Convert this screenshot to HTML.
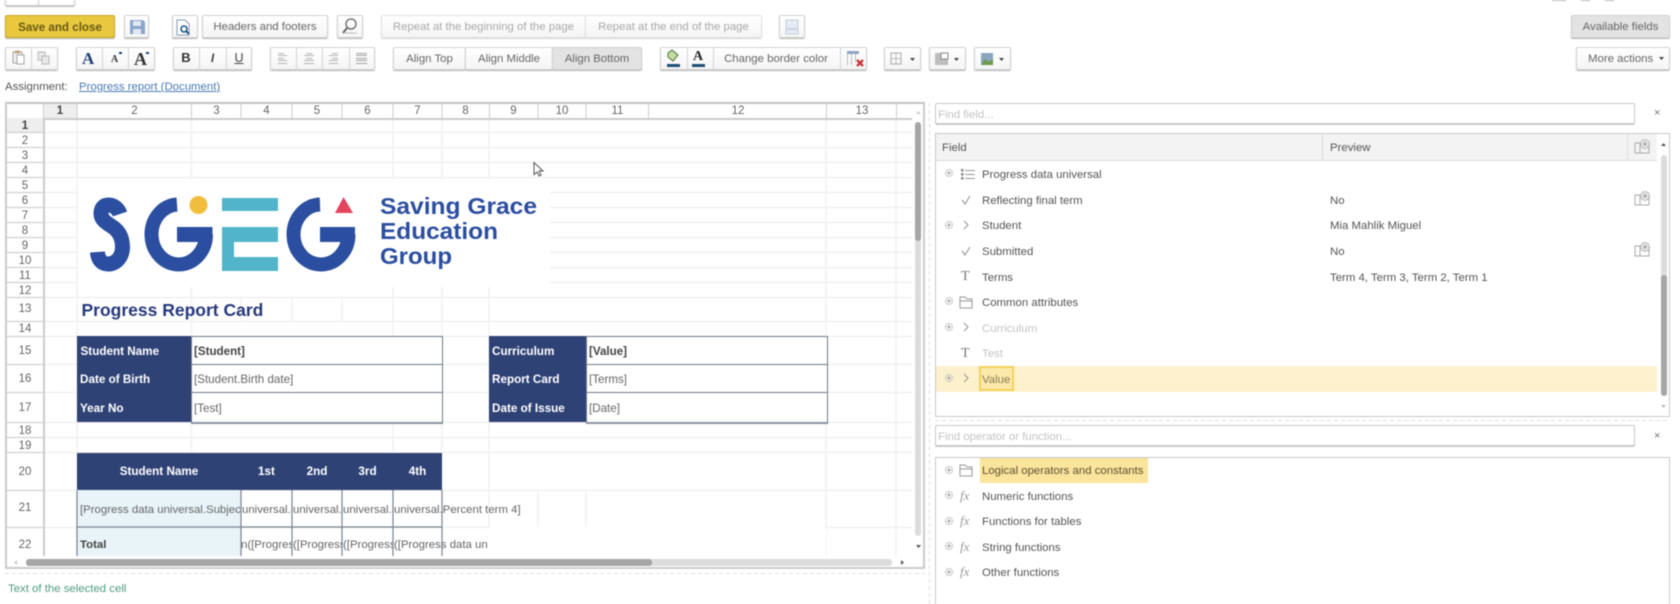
<!DOCTYPE html>
<html><head><meta charset="utf-8"><title>Report</title>
<style>
html,body{margin:0;padding:0;background:#fff}
body{width:1680px;height:604px;overflow:hidden;position:relative;font-family:"Liberation Sans",sans-serif;font-size:11.4px;color:#555}
#r{position:absolute;left:0;top:0;width:1680px;height:604px;overflow:hidden;filter:blur(.45px);background:#fff}
#r div,#r svg,#r span.a{position:absolute}
.b{box-sizing:border-box;height:23px;top:15px;border:1px solid #d2d2d2;border-radius:2px;background:linear-gradient(#fff,#f5f5f5);box-shadow:0 1px 1px #b5b5b5;text-align:center;line-height:23px;color:#666;white-space:nowrap}
.r2{top:47px}
.p{background:#e3e3e3}
.d{color:#aaa;box-shadow:0 1px 1px #d5d5d5;border-color:#e2e2e2}
.v{width:1px;background:#d4d4d4;height:23px}
.t{white-space:nowrap;line-height:14px;color:#555;margin-top:1px}
.h{white-space:nowrap;text-align:center;color:#666;font-size:11.5px;line-height:15px}
.w{color:#fff;font-weight:bold;white-space:nowrap;line-height:14px;font-size:11.7px;margin-top:1px}
.g{color:#666;white-space:nowrap;line-height:14px;overflow:hidden;margin-top:1px}
.g2{font-size:11.6px}
.in{box-sizing:border-box;border:1px solid #c8c8c8;border-bottom-width:2px;border-radius:2px;background:#fff;color:#c4c4c4;line-height:22px;padding-left:2px;white-space:nowrap}
</style></head><body><div id="r">

<!-- top cut-off -->
<div style="left:5px;top:-16px;width:70px;height:22px;box-sizing:border-box;border:1px solid #ccc;border-radius:2px;box-shadow:0 1px 1px #bbb"></div>
<div style="left:38px;top:0;width:1px;height:6px;background:#ccc"></div>
<div style="left:112px;top:-15px;font-size:16px;line-height:20px;color:#333;white-space:nowrap">TEST</div>
<div style="left:1552px;top:0;width:14px;height:1px;background:#bbb"></div>
<div style="left:1581px;top:0;width:9px;height:1px;background:#bbb"></div>
<div style="left:1605px;top:0;width:9px;height:1px;background:#bbb"></div>

<!-- toolbar row 1 -->
<div class="b" style="left:5px;width:110px;background:#e8c83f;border-color:#c9a92c;color:#6b5a15;font-weight:bold;font-size:11.6px">Save and close</div>
<div class="b" style="left:124px;width:25px"></div>
<div class="b" style="left:172px;width:26px"></div>
<div class="b" style="left:202px;width:126px">Headers and footers</div>
<div class="b" style="left:337px;width:26px"></div>
<div class="b d" style="left:381px;width:205px">Repeat at the beginning of the page</div>
<div class="b d" style="left:585px;width:177px">Repeat at the end of the page</div>
<div class="b" style="left:779px;width:26px"></div>
<div class="b p" style="left:1571px;width:99px">Available fields</div>

<!-- toolbar row 2 -->
<div class="b r2" style="left:5px;width:53px"></div><div class="v" style="left:31px;top:47px"></div>
<div class="b r2" style="left:76px;width:79px"></div><div class="v" style="left:102px;top:47px"></div><div class="v" style="left:128px;top:47px"></div>
<div style="left:82px;top:49px;font:bold 17px/20px 'Liberation Serif',serif;color:#1f3f73">A</div>
<div style="left:111px;top:53px;font:bold 10px/14px 'Liberation Serif',serif;color:#333">A</div>
<div style="left:134px;top:48px;font:bold 18px/22px 'Liberation Serif',serif;color:#333">A</div>
<div style="left:119px;top:52px;width:3px;height:2px;background:#1f3f73"></div>
<div style="left:146px;top:52px;width:3px;height:2px;background:#1f3f73"></div>
<div class="b r2" style="left:173px;width:79px"></div><div class="v" style="left:199px;top:47px"></div><div class="v" style="left:226px;top:47px"></div>
<div style="left:173px;width:26px;top:50px;text-align:center;font:bold 13px/16px 'Liberation Sans',sans-serif;color:#333">B</div>
<div style="left:199px;width:27px;top:50px;text-align:center;font:italic bold 12px/16px 'Liberation Sans',sans-serif;color:#444">I</div>
<div style="left:226px;width:26px;top:50px;text-align:center;font:12.5px/16px 'Liberation Sans',sans-serif;color:#444;text-decoration:underline">U</div>
<div class="b r2" style="left:270px;width:105px"></div><div class="v" style="left:296px;top:47px"></div><div class="v" style="left:322px;top:47px"></div><div class="v" style="left:349px;top:47px"></div>
<div class="b r2" style="left:393px;width:73px">Align Top</div>
<div class="b r2" style="left:465px;width:88px">Align Middle</div>
<div class="b r2 p" style="left:552px;width:90px">Align Bottom</div>
<div class="b r2" style="left:660px;width:207px"></div><div class="v" style="left:687px;top:47px"></div><div class="v" style="left:713px;top:47px"></div><div class="v" style="left:840px;top:47px"></div>
<div style="left:713px;width:126px;top:52px;text-align:center;line-height:14px;color:#666;white-space:nowrap">Change border color</div>
<div style="left:693px;top:49px;font:bold 14px/16px 'Liberation Serif',serif;color:#222">A</div>
<div class="b r2" style="left:884px;width:37px"></div>
<div class="b r2" style="left:929px;width:37px"></div>
<div class="b r2" style="left:974px;width:37px"></div>
<div class="b r2" style="left:1576px;width:94px;text-align:left;padding-left:11px">More actions</div>

<!-- toolbar icons -->
<svg style="left:0;top:0" width="1680" height="80" fill="none">
<!-- save -->
<path d="M130 20h13l2 2v12h-15z" fill="#8aa6cd"/><rect x="133" y="21" width="8" height="5" fill="#dfe7f2"/><rect x="133" y="29" width="8" height="5" fill="#dfe7f2"/>
<!-- preview -->
<path d="M177 20h8l4 4v11h-12z" fill="#fff" stroke="#8a9ab5"/><circle cx="184" cy="29" r="3" stroke="#1d5a8a" stroke-width="1.600"/><path d="M186 31l3 3" stroke="#1d5a8a" stroke-width="2"/>
<!-- search -->
<circle cx="351" cy="24" r="5" stroke="#777" stroke-width="1.500"/><path d="M347 28l-4 5" stroke="#666" stroke-width="2"/><path d="M345 33h12" stroke="#bbb"/>
<!-- page -->
<rect x="786" y="20" width="12" height="14" fill="#e6ecf4" stroke="#c4cddb"/><rect x="787" y="28" width="10" height="2" fill="#c6d3e4"/>
<!-- paste/copy -->
<rect x="13" y="52" width="9" height="11" fill="#eee" stroke="#a8a8a8"/><rect x="15" y="50.500" width="5" height="3" fill="#c0a882"/><rect x="17" y="55" width="7" height="9" fill="#fff" stroke="#a8a8a8"/>
<rect x="38" y="52" width="7" height="8" fill="#e8e8e8" stroke="#b8b8b8"/><rect x="42" y="56" width="7" height="8" fill="#e8e8e8" stroke="#b8b8b8"/>
<!-- align -->
<g stroke="#b4b4b4"><path d="M278 53.500h6M278 55.500h9M278 58.500h6M278 60.500h9M278 63.500h9"/><path d="M306 53.500h6M304 55.500h10M306 58.500h6M304 60.500h10M304 63.500h10"/><path d="M332 53.500h6M329 55.500h9M332 58.500h6M329 60.500h9M329 63.500h9"/><path d="M356 53.500h11M356 55.500h11M356 58.500h11M356 60.500h11M356 63.500h11" stroke="#a2a2a2"/></g>
<!-- fill -->
<path d="M668 53l4-3 6 5-5 6-5-4z" fill="#c5dca0" stroke="#4c7a3a"/><rect x="667" y="64" width="13" height="3" fill="#1f4f78"/>
<rect x="692" y="64" width="13" height="3" fill="#1f4f78"/>
<!-- border clear -->
<rect x="847" y="51" width="12" height="3" fill="#8fa6c4"/><path d="M847.500 54v11M851.500 54v11M855.500 54v8" stroke="#bbb"/><path d="M857 60l6 6M863 60l-6 6" stroke="#c83a3a" stroke-width="2.400"/>
<!-- grid -->
<rect x="891" y="53" width="10" height="11" stroke="#aaa"/><path d="M896 53v11M891 58.500h10" stroke="#bbb"/><path d="M910 58h5l-2.500 3z" fill="#444"/>
<rect x="935" y="53" width="13" height="12" fill="#bdbdbd"/><rect x="941" y="53" width="7" height="6" fill="#fff" stroke="#888"/><path d="M954 58h5l-2.500 3z" fill="#444"/>
<rect x="981" y="53" width="12" height="12" fill="#8aa5c0"/><path d="M981 65l4-6 4 3 4-3v6z" fill="#6e9a4a"/><path d="M999 58h5l-2.500 3z" fill="#444"/>
<path d="M1659 57h5l-2.500 3z" fill="#444"/>
</svg>

<!-- assignment -->
<div class="t" style="left:5px;top:79px">Assignment:</div>
<div class="t" style="left:79px;top:79px;color:#4a7ab5;text-decoration:underline">Progress report (Document)</div>

<!-- grid frame -->
<div style="left:5px;top:102px;width:920px;height:467px;box-sizing:border-box;border:2px solid #ccc;border-top-color:#c4c4c4;background:#fff"></div>

<!-- grid lines -->
<svg style="left:0;top:0" width="930" height="570" fill="none">
<g stroke="#f1f1f1" stroke-width="1.500">
<path d="M43 132.500H912M43 147.500H912M43 162.500H912M43 177.500H912M43 192.500H912M43 207.500H912M43 222.500H912M43 237.500H912M43 252.500H912M43 267.500H912M43 282.500H912M43 297.500H912M43 321.500H912M43 336.500H912M43 364.500H912M43 392.500H912M43 422.500H912M43 437.500H912M43 452.500H912M43 490.500H912M43 527.500H489M826 527.500H912"/>
<path d="M77 118V556M191.500 118V180M393 118V180M442 118V180M489 118V180M826 118V556M896 118V556M191.500 287V336M393 287V336M442 287V336M489 287V527M241 297V321M292 297V321M342 297V321M191.500 422V452M393 422V452M442 422V452M538 490V527M586 490V527"/>
</g>
<rect x="78" y="180" width="472" height="107" fill="#fff"/>
</svg>

<!-- header -->
<div style="left:7px;top:104px;width:905px;height:14px;border-bottom:2px solid #ccc;background:#fff"></div>
<div style="left:43px;top:104px;width:34px;height:14px;background:#eee"></div>
<svg style="left:0;top:0" width="930" height="120" fill="none"><path stroke="#ccc" d="M43.500 104V118M77 104V118M191.500 104V118M241 104V118M292 104V118M342 104V118M393 104V118M442 104V118M489.500 104V118M538 104V118M586 104V118M648.500 104V118M826.500 104V118M896.500 104V118"/></svg>
<div class="h" style="left:43px;width:34px;top:104px;font-weight:bold;color:#444">1</div>
<div class="h" style="left:77px;width:115px;top:104px">2</div>
<div class="h" style="left:192px;width:49px;top:104px">3</div>
<div class="h" style="left:241px;width:51px;top:104px">4</div>
<div class="h" style="left:292px;width:50px;top:104px">5</div>
<div class="h" style="left:342px;width:51px;top:104px">6</div>
<div class="h" style="left:393px;width:49px;top:104px">7</div>
<div class="h" style="left:442px;width:47px;top:104px">8</div>
<div class="h" style="left:489px;width:49px;top:104px">9</div>
<div class="h" style="left:538px;width:48px;top:104px">10</div>
<div class="h" style="left:586px;width:63px;top:104px">11</div>
<div class="h" style="left:649px;width:178px;top:104px">12</div>
<div class="h" style="left:827px;width:70px;top:104px">13</div>

<!-- row header -->
<div style="left:7px;top:118px;width:36px;height:438px;border-right:2px solid #ccc;background:#fff"></div>
<div style="left:7px;top:118px;width:36px;height:14px;background:#eee"></div>
<svg style="left:0;top:0" width="50" height="560" fill="none"><path stroke="#d2d2d2" stroke-width="1.300" d="M7 132.500H43M7 147.500H43M7 162.500H43M7 177.500H43M7 192.500H43M7 207.500H43M7 222.500H43M7 237.500H43M7 252.500H43M7 267.500H43M7 282.500H43M7 297.500H43M7 321.500H43M7 336.500H43M7 364.500H43M7 392.500H43M7 422.500H43M7 437.500H43M7 452.500H43M7 490.500H43M7 527.500H43"/></svg>
<div class="h" style="left:7px;width:36px;top:119px;font-weight:bold;color:#444">1</div>
<div class="h" style="left:7px;width:36px;top:134px">2</div>
<div class="h" style="left:7px;width:36px;top:149px">3</div>
<div class="h" style="left:7px;width:36px;top:164px">4</div>
<div class="h" style="left:7px;width:36px;top:179px">5</div>
<div class="h" style="left:7px;width:36px;top:194px">6</div>
<div class="h" style="left:7px;width:36px;top:209px">7</div>
<div class="h" style="left:7px;width:36px;top:224px">8</div>
<div class="h" style="left:7px;width:36px;top:239px">9</div>
<div class="h" style="left:7px;width:36px;top:254px">10</div>
<div class="h" style="left:7px;width:36px;top:269px">11</div>
<div class="h" style="left:7px;width:36px;top:284px">12</div>
<div class="h" style="left:7px;width:36px;top:302px">13</div>
<div class="h" style="left:7px;width:36px;top:322px">14</div>
<div class="h" style="left:7px;width:36px;top:344px">15</div>
<div class="h" style="left:7px;width:36px;top:372px">16</div>
<div class="h" style="left:7px;width:36px;top:401px">17</div>
<div class="h" style="left:7px;width:36px;top:424px">18</div>
<div class="h" style="left:7px;width:36px;top:439px">19</div>
<div class="h" style="left:7px;width:36px;top:465px">20</div>
<div class="h" style="left:7px;width:36px;top:501px">21</div>
<div class="h" style="left:7px;width:36px;top:538px">22</div>

<!-- logo -->
<svg style="left:0;top:0" width="930" height="300" fill="none">
<path d="M120 214C118 208 113 205 108.500 205C103 205 101 209 101 213.500C101 219 105 222 112 226.500C119 231 122.500 238 122.500 247C122.500 257 116 264 108 264C102 264 98 260 97.500 252" stroke="#2b4ea0" stroke-width="15"/>
<path d="M177 204.500A27.250 30 0 1 0 206 234.500" stroke="#2b4ea0" stroke-width="14"/>
<rect x="177" y="227" width="35.500" height="15" fill="#2b4ea0"/>
<circle cx="198.500" cy="205" r="9" fill="#f1bd3c"/>
<rect x="222" y="198" width="56" height="13" fill="#52b4c8"/>
<rect x="222" y="227" width="56" height="15" fill="#52b4c8"/>
<rect x="222" y="227" width="12" height="44" fill="#52b4c8"/>
<rect x="222" y="257" width="56" height="14" fill="#52b4c8"/>
<path d="M320 204.500A27.500 30 0 1 0 348.500 234.500" stroke="#2b4ea0" stroke-width="14"/>
<rect x="320" y="227" width="35" height="15" fill="#2b4ea0"/>
<path d="M335 213L343.500 197L353 213Z" fill="#e2455c"/>
<text x="380" y="214" font-family="Liberation Sans" font-weight="bold" font-size="23" fill="#2b4ea0" textLength="157" lengthAdjust="spacingAndGlyphs">Saving Grace</text>
<text x="380" y="239" font-family="Liberation Sans" font-weight="bold" font-size="23" fill="#2b4ea0" textLength="118" lengthAdjust="spacingAndGlyphs">Education</text>
<text x="380" y="264" font-family="Liberation Sans" font-weight="bold" font-size="23" fill="#2b4ea0" textLength="72" lengthAdjust="spacingAndGlyphs">Group</text>
</svg>

<div style="left:81.500px;top:299.500px;font-weight:bold;font-size:17.500px;line-height:20px;color:#27397c;white-space:nowrap">Progress Report Card</div>

<!-- info table left -->
<div style="left:77px;top:336px;width:115px;height:86px;background:#2f4276"></div>
<div style="left:191px;top:336px;width:250px;height:85px;border:1px solid #707a8a;border-bottom:2px solid #8c94a0;background:#fff"></div>
<div style="left:192px;top:364px;width:250px;height:1px;background:#707a8a"></div>
<div style="left:192px;top:392px;width:250px;height:1px;background:#707a8a"></div>
<div class="w" style="left:80.500px;top:344px">Student Name</div>
<div class="w" style="left:80px;top:372px">Date of Birth</div>
<div class="w" style="left:80px;top:401px">Year No</div>
<div class="g g2" style="left:194px;top:344px;font-weight:bold;color:#444">[Student]</div>
<div class="g g2" style="left:194px;top:372px">[Student.Birth date]</div>
<div class="g g2" style="left:194px;top:401px">[Test]</div>

<!-- info table right -->
<div style="left:489px;top:336px;width:97px;height:86px;background:#2f4276"></div>
<div style="left:586px;top:336px;width:240px;height:85px;border:1px solid #707a8a;border-bottom:2px solid #8c94a0;background:#fff"></div>
<div style="left:587px;top:364px;width:240px;height:1px;background:#707a8a"></div>
<div style="left:587px;top:392px;width:240px;height:1px;background:#707a8a"></div>
<div class="w" style="left:492px;top:344px">Curriculum</div>
<div class="w" style="left:492px;top:372px">Report Card</div>
<div class="w" style="left:492px;top:401px">Date of Issue</div>
<div class="g g2" style="left:589px;top:344px;font-weight:bold;color:#444">[Value]</div>
<div class="g g2" style="left:589px;top:372px">[Terms]</div>
<div class="g g2" style="left:589px;top:401px">[Date]</div>

<!-- score table -->
<div style="left:77px;top:453px;width:365px;height:37px;background:#2f4276"></div>
<div class="w" style="left:77px;width:164px;top:464px;text-align:center">Student Name</div>
<div class="w" style="left:241px;width:51px;top:464px;text-align:center">1st</div>
<div class="w" style="left:292px;width:50px;top:464px;text-align:center">2nd</div>
<div class="w" style="left:342px;width:51px;top:464px;text-align:center">3rd</div>
<div class="w" style="left:393px;width:49px;top:464px;text-align:center">4th</div>
<div style="left:77px;top:490px;width:164px;height:66px;background:#e8f4f8"></div>
<div style="left:489px;top:528px;width:337px;height:28px;background:#fff"></div>
<div style="left:442px;top:528px;width:48px;height:28px;background:#fff"></div>
<svg style="left:0;top:0" width="500" height="560" fill="none"><g stroke="#7a8290" stroke-width="1.200"><path d="M77 490.500V556M241 490V556M292 490V556M342 490V556M393 490V556M442 490V556M77 527H442"/></g></svg>
<div class="g" style="left:80px;top:502px;width:161px">[Progress data universal.Subject]</div>
<div class="g" style="left:242px;top:502px;width:50px">universal.Percent term 1]</div>
<div class="g" style="left:293px;top:502px;width:49px">universal.Percent term 2]</div>
<div class="g" style="left:343px;top:502px;width:50px">universal.Percent term 3]</div>
<div class="g" style="left:394px;top:502px;overflow:visible">universal.Percent term 4]</div>
<div class="g" style="left:80px;top:537px;font-weight:bold;color:#444">Total</div>
<div class="g" style="left:241px;top:537px;width:51px">n([Progress data un</div>
<div class="g" style="left:293px;top:537px;width:49px">([Progress data un</div>
<div class="g" style="left:343px;top:537px;width:50px">([Progress data un</div>
<div class="g" style="left:394px;top:537px;width:96px">([Progress data un</div>

<!-- grid scrollbars -->
<div style="left:915px;top:122px;width:6px;height:414px;border-radius:3px;background:#dcdcdc"></div>
<div style="left:915px;top:122px;width:6px;height:119px;border-radius:3px;background:#a6a6a6"></div>
<div style="left:26px;top:559px;width:866px;height:7px;border-radius:3px;background:#dcdcdc"></div>
<div style="left:26px;top:559px;width:626px;height:7px;border-radius:3px;background:#a6a6a6"></div>
<svg style="left:0;top:0" width="930" height="570"><path d="M916 114h5l-2.500-3z" fill="#ccc"/><path d="M916 545h5l-2.500 3z" fill="#555"/><path d="M17 560v5l-3-2.500z" fill="#ccc"/><path d="M901 560v5l3-2.500z" fill="#555"/></svg>

<!-- separators -->
<svg style="left:0;top:0" width="1680" height="604" fill="none"><path stroke="#ddd" stroke-dasharray="4 3" d="M5 573.500H925M929.500 103V604M935 420.500H1670"/></svg>
<div class="t" style="left:8px;top:581px;color:#4f9d80">Text of the selected cell</div>

<!-- right: find field -->
<div class="in" style="left:935px;top:103px;width:700px;height:22px">Find field...</div>
<div class="t" style="left:1654px;top:105px;color:#777;font-size:11px">×</div>

<!-- right: field panel -->
<div style="left:935px;top:133px;width:735px;height:284px;box-sizing:border-box;border:1px solid #c8c8c8;background:#fff"></div>
<div style="left:936px;top:134px;width:721px;height:27px;background:#f3f3f3;border-bottom:1px solid #ddd;box-sizing:border-box"></div>
<div style="left:1322px;top:134px;width:1px;height:27px;background:#ddd"></div>
<div style="left:1627px;top:134px;width:1px;height:27px;background:#ddd"></div>
<div class="t" style="left:942px;top:140px">Field</div>
<div class="t" style="left:1330px;top:140px">Preview</div>

<div style="left:936px;top:366px;width:721px;height:26px;background:#fdf1cd"></div>
<div style="left:979px;top:366px;width:35px;height:25px;box-sizing:border-box;border:2px solid #f3d25a;background:#fbe9ac"></div>

<div class="t" style="left:982px;top:167px">Progress data universal</div>
<div class="t" style="left:982px;top:193px">Reflecting final term</div>
<div class="t" style="left:982px;top:218px">Student</div>
<div class="t" style="left:982px;top:244px">Submitted</div>
<div class="t" style="left:982px;top:270px">Terms</div>
<div class="t" style="left:982px;top:295px">Common attributes</div>
<div class="t" style="left:982px;top:321px;color:#c4c4c4">Curriculum</div>
<div class="t" style="left:982px;top:346px;color:#c4c4c4">Test</div>
<div class="t" style="left:982px;top:372px;color:#8a7d50">Value</div>
<div class="t" style="left:1330px;top:193px">No</div>
<div class="t" style="left:1330px;top:218px">Mia Mahlik Miguel</div>
<div class="t" style="left:1330px;top:244px">No</div>
<div class="t" style="left:1330px;top:270px">Term 4, Term 3, Term 2, Term 1</div>

<!-- field scrollbar -->
<div style="left:1661px;top:155px;width:6px;height:241px;border-radius:3px;background:#dcdcdc"></div>
<div style="left:1661px;top:275px;width:6px;height:121px;border-radius:3px;background:#a6a6a6"></div>

<!-- operator panel -->
<div class="in" style="left:935px;top:425px;width:700px;height:22px">Find operator or function...</div>
<div class="t" style="left:1654px;top:428px;color:#777;font-size:11px">×</div>
<div style="left:935px;top:457px;width:735px;height:160px;box-sizing:border-box;border:1px solid #c8c8c8;background:#fff"></div>
<div style="left:980px;top:458px;width:168px;height:25px;background:#fbe49c"></div>
<div class="t" style="left:982px;top:463px;color:#5c5233">Logical operators and constants</div>
<div class="t" style="left:982px;top:489px">Numeric functions</div>
<div class="t" style="left:982px;top:514px">Functions for tables</div>
<div class="t" style="left:982px;top:540px">String functions</div>
<div class="t" style="left:982px;top:565px">Other functions</div>
<div style="left:960px;top:489px;font:italic 13px/14px 'Liberation Serif',serif;color:#999">fx</div>
<div style="left:960px;top:514px;font:italic 13px/14px 'Liberation Serif',serif;color:#999">fx</div>
<div style="left:960px;top:540px;font:italic 13px/14px 'Liberation Serif',serif;color:#999">fx</div>
<div style="left:960px;top:565px;font:italic 13px/14px 'Liberation Serif',serif;color:#999">fx</div>
<div style="left:961px;top:270px;font:14px/14px 'Liberation Serif',serif;color:#777">T</div>
<div style="left:961px;top:347px;font:14px/14px 'Liberation Serif',serif;color:#777">T</div>

<!-- right panel icons -->
<svg style="left:0;top:0" width="1680" height="604" fill="none">
<defs>
<g id="pl"><circle r="3.500" stroke="#c8c8c8"/><path d="M-2 0H2M0-2V2" stroke="#a0a0a0"/></g>
<g id="gr" stroke="#aaa"><rect x="-7" y="-3" width="5" height="10"/><rect x="-2" y="-1" width="9" height="8"/><circle cx="3" cy="-2" r="4.500" fill="#e2e2e2" stroke="#aaa" stroke-dasharray="2 1"/><circle cx="3" cy="-2" r="1.600" fill="#aaa" stroke="none"/></g>
<path id="ch" d="M-2-4l4 4-4 4" stroke="#999" stroke-width="1.100"/>
<path id="ck" d="M-4 0l3 4 5-8" stroke="#999" stroke-width="1.100"/>
<g id="fd" stroke="#999"><path d="M-6 6V-5H-1L1-3H6V6Z"/><path d="M-6-1H6"/></g>
</defs>
<use href="#pl" x="949" y="173"/><use href="#pl" x="949" y="225"/><use href="#pl" x="949" y="301"/><use href="#pl" x="949" y="327"/><use href="#pl" x="949" y="378"/>
<use href="#pl" x="949" y="470"/><use href="#pl" x="949" y="495"/><use href="#pl" x="949" y="521"/><use href="#pl" x="949" y="546"/><use href="#pl" x="949" y="572"/>
<g stroke="#999"><path d="M965 170.500h10M965 174.500h10M965 178.500h10"/></g><g fill="#888"><rect x="961" y="169" width="2.500" height="2.500"/><rect x="961" y="173" width="2.500" height="2.500"/><rect x="961" y="177" width="2.500" height="2.500"/></g>
<use href="#ck" x="966" y="200"/><use href="#ck" x="966" y="251"/>
<use href="#ch" x="966" y="225"/><use href="#ch" x="966" y="327"/><use href="#ch" x="966" y="378"/>
<use href="#fd" x="966" y="302"/><use href="#fd" x="966" y="470"/>
<use href="#gr" x="1642" y="146"/><use href="#gr" x="1642" y="198"/><use href="#gr" x="1642" y="249"/>
<path d="M1661 146h5l-2.500-3z" fill="#555"/><path d="M1661 405h5l-2.500 3z" fill="#bbb"/>
<!-- cursor -->
<path d="M534 162.500v12l3-2.500 2 4 2-1-2-4h4z" fill="#fff" stroke="#555"/>
</svg>
</div></body></html>
